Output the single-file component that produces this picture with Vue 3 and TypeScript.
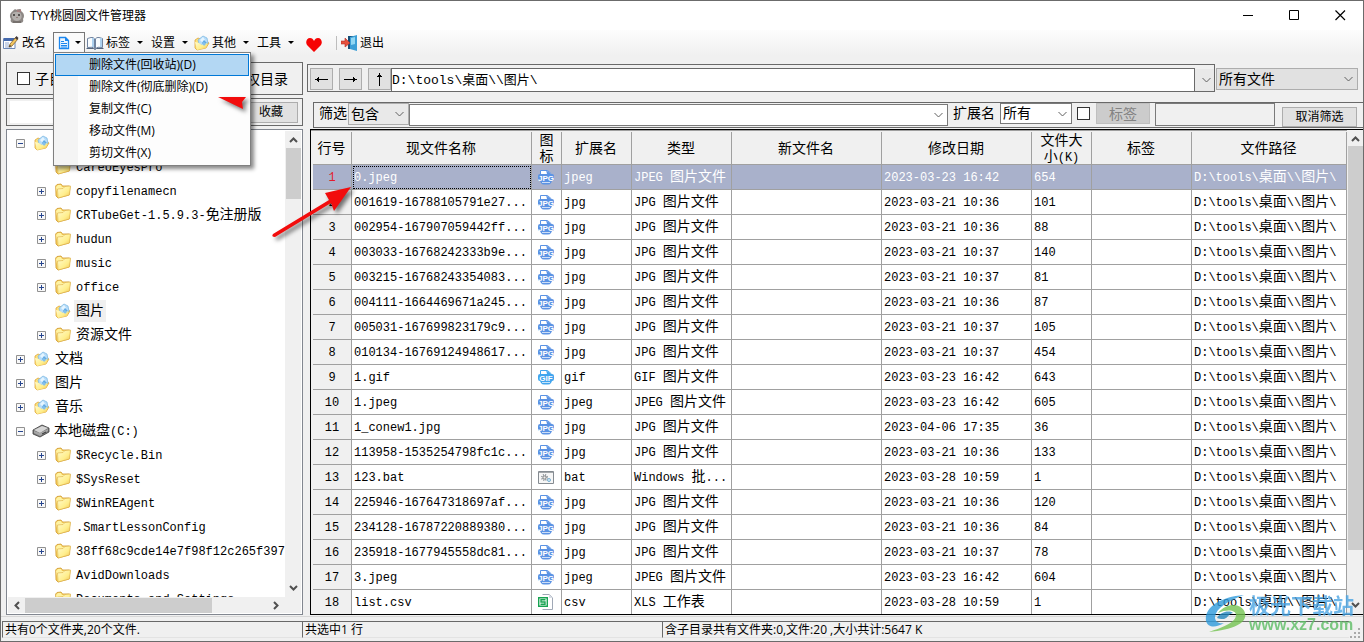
<script setup lang="ts">
import { h, ref } from 'vue'

/* Splits a string into Latin and CJK runs so both share a 1:2 width grid. */
const Mixed = (props: { text: string }) =>
  h(
    'span',
    { class: 'mixed' },
    (props.text.match(/[\x00-\x7f]+|[^\x00-\x7f]+/g) ?? []).map((run) =>
      h('span', { class: run.charCodeAt(0) < 128 ? 'latin' : 'han' }, run),
    ),
  )
Mixed.props = ['text']

interface TreeNode {
  label: string
  level: number
  icon: 'folder' | 'user' | 'drive'
  state: '' | '+' | '-'
  selected?: boolean
}

const nodes: TreeNode[] = [
  { label: '桌面', level: 0, icon: 'user', state: '-' },
  { label: 'CareUEyesPro', level: 1, icon: 'folder', state: '' },
  { label: 'copyfilenamecn', level: 1, icon: 'folder', state: '+' },
  { label: 'CRTubeGet-1.5.9.3-免注册版', level: 1, icon: 'folder', state: '+' },
  { label: 'hudun', level: 1, icon: 'folder', state: '+' },
  { label: 'music', level: 1, icon: 'folder', state: '+' },
  { label: 'office', level: 1, icon: 'folder', state: '+' },
  { label: '图片', level: 1, icon: 'user', state: '', selected: true },
  { label: '资源文件', level: 1, icon: 'folder', state: '+' },
  { label: '文档', level: 0, icon: 'user', state: '+' },
  { label: '图片', level: 0, icon: 'user', state: '+' },
  { label: '音乐', level: 0, icon: 'user', state: '+' },
  { label: '本地磁盘(C:)', level: 0, icon: 'drive', state: '-' },
  { label: '$Recycle.Bin', level: 1, icon: 'folder', state: '+' },
  { label: '$SysReset', level: 1, icon: 'folder', state: '+' },
  { label: '$WinREAgent', level: 1, icon: 'folder', state: '+' },
  { label: '.SmartLessonConfig', level: 1, icon: 'folder', state: '' },
  { label: '38ff68c9cde14e7f98f12c265f3975', level: 1, icon: 'folder', state: '+' },
  { label: 'AvidDownloads', level: 1, icon: 'folder', state: '' },
  { label: 'Documents and Settings', level: 1, icon: 'folder', state: '' },
]

const menuItems = ['删除文件(回收站)(D)', '删除文件(彻底删除)(D)', '复制文件(C)', '移动文件(M)', '剪切文件(X)']

const columns = [
  { title: '行号', cls: 'c-no' },
  { title: '现文件名称', cls: 'c-name' },
  { title: '图标', cls: 'c-icon' },
  { title: '扩展名', cls: 'c-ext' },
  { title: '类型', cls: 'c-type' },
  { title: '新文件名', cls: 'c-new' },
  { title: '修改日期', cls: 'c-date' },
  { title: '文件大小(K)', cls: 'c-size' },
  { title: '标签', cls: 'c-tag' },
  { title: '文件路径', cls: 'c-path' },
]

const raw: [string, string, string, string, string][] = [
  ['0.jpeg', 'jpeg', 'JPEG 图片文件', '2023-03-23 16:42', '654'],
  ['001619-16788105791e27...', 'jpg', 'JPG 图片文件', '2023-03-21 10:36', '101'],
  ['002954-167907059442ff...', 'jpg', 'JPG 图片文件', '2023-03-21 10:36', '88'],
  ['003033-16768242333b9e...', 'jpg', 'JPG 图片文件', '2023-03-21 10:37', '140'],
  ['003215-16768243354083...', 'jpg', 'JPG 图片文件', '2023-03-21 10:37', '81'],
  ['004111-1664469671a245...', 'jpg', 'JPG 图片文件', '2023-03-21 10:36', '87'],
  ['005031-167699823179c9...', 'jpg', 'JPG 图片文件', '2023-03-21 10:37', '105'],
  ['010134-16769124948617...', 'jpg', 'JPG 图片文件', '2023-03-21 10:37', '454'],
  ['1.gif', 'gif', 'GIF 图片文件', '2023-03-23 16:42', '643'],
  ['1.jpeg', 'jpeg', 'JPEG 图片文件', '2023-03-23 16:42', '605'],
  ['1_conew1.jpg', 'jpg', 'JPG 图片文件', '2023-04-06 17:35', '36'],
  ['113958-1535254798fc1c...', 'jpg', 'JPG 图片文件', '2023-03-21 10:36', '133'],
  ['123.bat', 'bat', 'Windows 批...', '2023-03-28 10:59', '1'],
  ['225946-167647318697af...', 'jpg', 'JPG 图片文件', '2023-03-21 10:36', '120'],
  ['234128-16787220889380...', 'jpg', 'JPG 图片文件', '2023-03-21 10:36', '84'],
  ['235918-1677945558dc81...', 'jpg', 'JPG 图片文件', '2023-03-21 10:37', '78'],
  ['3.jpeg', 'jpeg', 'JPEG 图片文件', '2023-03-23 16:42', '604'],
  ['list.csv', 'csv', 'XLS 工作表', '2023-03-28 10:59', '1'],
]
const files = raw.map(([name, ext, type, date, size]) => ({ name, ext, type, date, size, path: 'D:\\tools\\桌面\\\\图片\\' }))

const activeRow = ref(0)
const currentPath = ref('D:\\tools\\桌面\\\\图片\\')
</script>

<template>
  <div class="window">
    <header class="titlebar">
      <svg class="logo" viewBox="0 0 16 16" width="16" height="16">
        <path d="M4 3C5 1 7 1 8 2C10 0 13 1 12 3C15 5 16 8 14 11C15 14 13 15 11 15H5C2 15 1 13 2 11C0 8 1 5 4 3Z" fill="#8d8885" />
        <path d="M3 6C5 3 11 3 12 6C14 10 11 13 8 13S2 10 3 6Z" fill="#b3afac" />
        <path d="M8 1L10 3L12 1L12 4H8Z" fill="#a77f80" />
        <circle cx="5" cy="7" r="1" fill="#35302f" /><circle cx="10" cy="7" r="1" fill="#35302f" />
        <path d="M7 9H9L8 10Z" fill="#76504f" /><path d="M4 13H12V15H4Z" fill="#77716e" />
      </svg>
      <h1>TYY桃圆圆文件管理器</h1>
      <div class="caption">
        <button aria-label="最小化"><svg width="11" height="11"><path d="M0 5.500H10" stroke="#000" /></svg></button>
        <button aria-label="最大化"><svg width="11" height="11"><path d="M.5.5H9.500V9.500H.5Z" fill="none" stroke="#000" /></svg></button>
        <button aria-label="关闭"><svg width="11" height="11"><path d="M.5.5L10 10M10 .5L.5 10" stroke="#000" stroke-width="1.200" /></svg></button>
      </div>
    </header>

    <nav class="toolbar">
      <button class="tool rename">
        <svg width="16" height="16" viewBox="0 0 16 16">
          <path d="M.5 3.500H12V13.500H.5Z" fill="#fff" stroke="#6c87b5" /><path d="M1 3H12V6H1Z" fill="#4469ad" />
          <path d="M2 8H6M2 10H6M2 12H9" stroke="#97acd2" /><path d="M6 12L7 9L13 2L15 4L9 11Z" fill="#f4c761" stroke="#735322" stroke-width=".7" />
          <path d="M12 3L13.500 1L15.500 3L14 5Z" fill="#433938" /><path d="M6 12L7 10L8 11Z" fill="#222" />
        </svg>改名
      </button>
      <div class="menu-host">
        <button class="tool open" aria-label="文件" aria-expanded="true">
          <svg width="12" height="14" viewBox="0 0 12 14"><path d="M1.500 1.500H7.500L10.500 4.500V12.500H1.500Z" fill="#eef6ff" stroke="#1c87ef" stroke-width="1.300" /><path d="M7 1V5H11Z" fill="#1c87ef" /><path d="M3 5.500H6M3 7.500H9M3 9.500H9M3 11H9" stroke="#1c87ef" /></svg>
          <i class="caret"></i>
        </button>
        <ul class="menu" role="menu">
          <li v-for="(item, i) in menuItems" :key="item" role="none">
            <button role="menuitem" :class="{ hot: i === 0 }">{{ item }}</button>
          </li>
        </ul>
      </div>
      <button class="tool tags">
        <svg width="18" height="14" viewBox="0 0 18 14"><path d="M1.500 2.500L5 1.500Q8 1 8.500 3V12.500Q7 10.500 1.500 11.500Z" fill="#f8fcff" stroke="#70839f" /><path d="M16.500 2.500L13 1.500Q10 1 9.500 3V12.500Q11 10.500 16.500 11.500Z" fill="#f8fcff" stroke="#70839f" /><path d="M7 2V11M15 2V11" stroke="#acd0ee" stroke-width="2" /><path d="M.5 12.500H7.500L9 13.500L10.500 12.500H17.500" fill="none" stroke="#53657e" /></svg>标签<i class="caret"></i>
      </button>
      <button class="tool">设置<i class="caret"></i></button>
      <button class="tool other">
        <svg width="16" height="16" viewBox="0 0 16 16"><use href="#user-folder" /></svg>其他<i class="caret"></i>
      </button>
      <button class="tool">工具<i class="caret"></i></button>
      <button class="tool heart" aria-label="收藏夹"><svg width="16" height="14" viewBox="0 0 16 14"><path d="M8 14L1 7C-1 4 1 0 4 0C6 0 7 1 8 3C9 1 10 0 12 0C15 0 17 4 15 7Z" fill="#f60404" /></svg></button>
      <span class="divider"></span>
      <button class="tool exit"><svg width="17" height="16" viewBox="0 0 17 16"><path d="M7 1H15V14H7Z" fill="#164d76" /><path d="M9 2L16 0V16L9 14Z" fill="#3c9fd6" /><path d="M10 3L14 2V9L10 10Z" fill="#91d7f3" /><path d="M0 6H4V3L9 8L4 12V9H0Z" fill="#e6503d" stroke="#b12d26" stroke-width=".6" /></svg>退出</button>
    </nav>

    <svg class="defs" width="0" height="0" aria-hidden="true">
      <defs>
        <linearGradient id="gold" x2="1" y2="1"><stop offset="0" stop-color="#fffbd0" /><stop offset=".6" stop-color="#ffee8c" /><stop offset="1" stop-color="#eebf4e" /></linearGradient>
        <symbol id="folder" viewBox="0 0 16 16"><path d="M.7 3L2 1.500L6 1L7.500 3H14.500L15 4L14 12L3 15L1 13Z" fill="#f7cf5b" stroke="#cf982f" stroke-width=".8" /><path d="M1 4L3 2H6L7 4L14 3.500V11L3 14Z" fill="#fff3a2" /><path d="M2.500 6L8 5.500L10 3.500L15.500 3L14.500 12L3 15Z" fill="url(#gold)" stroke="#dbac45" stroke-width=".6" /></symbol>
        <symbol id="user-folder" viewBox="0 0 16 16"><path d="M1 5L4 3L12 6L15 8L12 13L3 15L1 13Z" fill="#ffe27a" stroke="#d99c2d" stroke-width=".7" /><path d="M4 5L9 1L13 3L14 8L10 11L5 9Z" fill="#b6dcfa" stroke="#77b5df" stroke-width=".7" /><path d="M6 5L9 2L11 5L8 7Z" fill="#e5f5ff" /><path d="M10 5L13 8L10 11L8 8Z" fill="#62aae3" /><path d="M1 7L5 8L8 10L13 8L12 13L3 15Z" fill="url(#gold)" /><path d="M8 8L10 7L12 9L10 11Z" fill="#83bfeb" /></symbol>
        <symbol id="drive" viewBox="0 0 18 14"><path d="M1 6L10 1L17 4V8L8 13L1 10Z" fill="#777" stroke="#3f3f3f" stroke-width=".8" /><path d="M2 6L10 2L16 4L8 9Z" fill="#d5d5d5" /><path d="M8 9L16 5V7L8 12L2 9V7Z" fill="#a6a6a6" /><path d="M10 10L14 8" stroke="#343434" /></symbol>
      </defs>
    </svg>

    <main class="body">
      <aside class="side">
        <div class="box options">
          <label><input type="checkbox" />子目录</label>
          <span>授权目录</span>
        </div>
        <div class="box favorite">
          <input type="text" aria-label="收藏目录" />
          <button class="btn">收藏</button>
        </div>
        <div class="tree">
          <div class="tree-main">
            <ul class="nodes">
              <li v-for="(n, i) in nodes" :key="i" :class="'level' + n.level">
                <button v-if="n.state" class="expander" :aria-label="n.state === '+' ? '展开' : '折叠'">
                  <svg width="9" height="9"><path d="M.5.5H8.500V8.500H.5Z" fill="#f8f8f8" stroke="#919191" /><path d="M2 4.500H7" stroke="#27468f" /><path v-if="n.state === '+'" d="M4.500 2V7" stroke="#27468f" /></svg>
                </button>
                <span v-else class="expander"></span>
                <svg v-if="n.icon === 'drive'" class="ico drive" width="18" height="14"><use href="#drive" /></svg>
                <svg v-else class="ico" width="16" height="16"><use :href="n.icon === 'user' ? '#user-folder' : '#folder'" /></svg>
                <span class="label" :class="{ picked: n.selected }"><Mixed :text="n.label" /></span>
              </li>
            </ul>
            <div class="vbar"><svg width="9" height="6"><path d="M1 5L4.500 1.500L8 5" /></svg><i class="tree-thumb"></i><svg class="end" width="9" height="6"><path d="M1 1L4.500 4.500L8 1" /></svg></div>
          </div>
          <div class="hbar"><svg width="6" height="9"><path d="M5 1L1.500 4.500L5 8" /></svg><i></i><svg class="end" width="6" height="9"><path d="M1 1L4.500 4.500L1 8" /></svg></div>
        </div>
      </aside>

      <section class="content">
        <div class="path-row">
          <div class="pathbox">
            <button class="btn arrow" aria-label="后退"><svg width="13" height="7"><path d="M0 3.500H13M3.500 1V6M2.500 2V5" stroke="#000" /></svg></button>
            <button class="btn arrow" aria-label="前进"><svg width="13" height="7"><path d="M0 3.500H13M9.500 1V6M10.500 2V5" stroke="#000" /></svg></button>
            <button class="btn arrow" aria-label="上一级"><svg width="7" height="13"><path d="M3.500 0V13M1 3.500H6M2 2.500H5" stroke="#000" /></svg></button>
            <input v-model="currentPath" type="text" aria-label="路径" />
            <button class="drop" aria-label="历史路径"><svg width="9" height="6"><path d="M.5 1L4.500 5L8.500 1" /></svg></button>
          </div>
          <div class="combo grey kinds"><select aria-label="文件种类"><option>所有文件</option></select><svg width="9" height="6"><path d="M.5 1L4.500 5L8.500 1" /></svg></div>
        </div>

        <div class="filter">
          <label for="mode">筛选</label>
          <div class="combo grey mode"><select id="mode"><option>包含</option></select><svg width="9" height="6"><path d="M.5 1L4.500 5L8.500 1" /></svg></div>
          <div class="combo words"><select aria-label="筛选内容"><option></option></select><svg width="9" height="6"><path d="M.5 1L4.500 5L8.500 1" /></svg></div>
          <label for="ext" class="ext-label">扩展名</label>
          <div class="combo ext"><select id="ext"><option>所有</option></select><svg width="9" height="6"><path d="M.5 1L4.500 5L8.500 1" /></svg></div>
          <input type="checkbox" aria-label="按标签筛选" />
          <button class="btn tag" disabled>标签</button>
          <input class="tagtext" type="text" aria-label="标签内容" disabled />
          <button class="btn cancel">取消筛选</button>
        </div>

        <div class="grid">
          <div class="table-wrap">
            <table>
              <colgroup><col v-for="c in columns" :key="c.cls" :class="c.cls" /></colgroup>
              <thead>
                <tr><th v-for="c in columns" :key="c.cls" scope="col" :class="c.cls"><div><Mixed :text="c.title" /></div></th></tr>
              </thead>
              <tbody>
                <tr v-for="(f, i) in files" :key="f.name" :class="{ active: i === activeRow }" @click="activeRow = i">
                  <th scope="row"><Mixed :text="String(i + 1)" /></th>
                  <td class="name"><Mixed :text="f.name" /></td>
                  <td class="file-icon">
                    <svg v-if="f.ext === 'bat'" width="16" height="13" viewBox="0 0 16 13"><path d="M.5.5H15.500V12.500H.5Z" fill="#f6f6f6" stroke="#858b91" /><path d="M1 1.500H15" stroke="#a3a7aa" /><circle cx="6.500" cy="6.500" r="2.500" fill="none" stroke="#8e9499" stroke-dasharray="1 1" stroke-width="2" /><circle cx="6.500" cy="6.500" r="1.500" fill="#eee" stroke="#888" /><circle cx="11" cy="9" r="1.500" fill="#d7edf9" stroke="#77aed0" /></svg>
                    <svg v-else-if="f.ext === 'csv'" width="16" height="16" viewBox="0 0 16 16"><path d="M4.500.5H11.500L14.500 3.500V15.500H4.500" fill="#fff" stroke="#a0a8b6" /><path d="M11 0V4H15" fill="#d9dee5" /><path d="M.7 3.700H9.300V12.300H.7Z" fill="#fff" stroke="#18a452" stroke-width="1.400" /><path d="M7.500 5.700H3V8H7V10.300H2.500" fill="none" stroke="#18a452" stroke-width="1.400" /></svg>
                    <svg v-else width="16" height="16" viewBox="0 0 16 16" :class="f.ext === 'gif' ? 'gif' : 'jpg'">
                      <path d="M2.500 6V1.500H9.500L13.500 5V7" fill="#fff" stroke="currentColor" /><path d="M8 1L13 5H9Z" fill="currentColor" />
                      <path d="M2 5H14Q16 5 16 7V10Q16 12 14 12L13 14Q12 15.500 10 15.500H6Q4 15.500 3 14L2 12Q0 12 0 10V7Q0 5 2 5Z" fill="currentColor" /><path d="M4 13.500H12" stroke="#fff" opacity=".7" />
                      <text x="8" y="12" text-anchor="middle">{{ f.ext === 'gif' ? 'GIF' : 'JPG' }}</text>
                    </svg>
                  </td>
                  <td><Mixed :text="f.ext" /></td>
                  <td><Mixed :text="f.type" /></td>
                  <td></td>
                  <td><Mixed :text="f.date" /></td>
                  <td><Mixed :text="f.size" /></td>
                  <td></td>
                  <td><Mixed :text="f.path" /></td>
                </tr>
              </tbody>
            </table>
          </div>
          <div class="vbar"><svg width="9" height="6"><path d="M1 5L4.500 1.500L8 5" /></svg><i class="grid-thumb"></i><svg class="end" width="9" height="6"><path d="M1 1L4.500 4.500L8 1" /></svg></div>
        </div>
      </section>
    </main>

    <footer class="status">
      <span class="s1">共有0个文件夹,20个文件.</span>
      <span class="s2">共选中1 行</span>
      <span class="s3">含子目录共有文件夹:0,文件:20 ,大小共计:5647 K</span>
      <svg class="grip" width="11" height="11"><path d="M8 0h2v2h-2zM4 4h2v2h-2zM8 4h2v2h-2zM0 8h2v2h-2zM4 8h2v2h-2zM8 8h2v2h-2z" fill="#aaa" /></svg>
    </footer>

    <svg class="pointer" width="150" height="150" viewBox="0 0 150 150" aria-hidden="true">
      <path d="M3 1L31 1L27 6L28 13Z" fill="#f20d0d" />
      <path d="M58 138L114 104L110 97L136 91L119 115L116 107L60 141Q56 141 58 138Z" fill="#f20d0d" />
    </svg>

    <div class="watermark" aria-hidden="true">
      <svg width="44" height="42" viewBox="0 0 44 42">
        <path d="M1 28C-1 15 14 4 39 2C23 8 11 15 10 24C10 29 14 31 19 30C11 35 3 35 1 28Z" fill="#2f9bdc" />
        <path d="M13 20C22 9 37 10 40 20C43 30 27 37 4 39C19 34 31 29 31 22C31 17 22 16 13 20Z" fill="#75c452" />
        <path d="M12 25C15 19 24 17 28 20C22 21 23 29 12 25Z" fill="#2487bd" />
      </svg>
      <div><strong>极光下载站</strong><b>www.xz7.com</b></div>
    </div>
  </div>
</template>

<style>
body { margin: 0; overflow: hidden; }
.mixed .latin { font-family: "Liberation Mono", monospace; font-size: 12px; line-height: 12px; white-space: pre; }
.mixed .han { font-family: "Noto Sans CJK SC", sans-serif; font-size: 14px; line-height: 14px; }
</style>

<style scoped>
* { box-sizing: border-box; }
.window { position: relative; display: flex; flex-direction: column; height: 100vh; border: 1px solid #6b6b6b; background: #f0f0f0; color: #000; font: 12px/16px "Open Sans", "Noto Sans CJK SC", sans-serif; }
button, input, select { font: inherit; color: inherit; margin: 0; border-radius: 0; }
button { padding: 0; border: 0; background: none; }
svg { display: block; flex: none; }
ul { list-style: none; margin: 0; padding: 0; }
.defs { position: absolute; }

.titlebar { display: flex; align-items: center; flex: none; height: 29px; padding-left: 8px; background: #fff; }
h1 { flex: 1; margin: 0 0 0 5px; font-size: 12px; font-weight: 400; }
.caption { display: flex; }
.caption button { display: grid; place-items: center; width: 46px; height: 28px; }

.toolbar { display: flex; align-items: center; flex: none; height: 25px; padding-left: 2px; background: linear-gradient(#fdfdfd, #f0f0f0); }
.tool { display: flex; align-items: center; height: 22px; white-space: nowrap; }
.rename { gap: 3px; width: 50px; }
.caret { margin: 0 8px 0 7px; border: 3px solid transparent; border-top-color: #000; border-bottom: 0; }
.menu-host { position: relative; }
.open { width: 32px; padding-left: 4px; border: 1px solid #777; border-bottom-color: #fafafa; background: #fafafa; }
.open .caret { margin: 0 0 0 5px; }
.tags { gap: 2px; padding-left: 1px; }
.tags .caret { margin-left: 5px; }
.other { gap: 2px; }
.other svg { margin-left: -2px; }
.other .caret { margin-left: 5px; }
.heart { margin: 4px 14px 0 4px; }
.divider { width: 1px; height: 14px; margin-right: 4px; background: #bdbdbd; }
.exit { gap: 2px; }
.menu { position: absolute; z-index: 3; top: 20px; left: 0; width: 198px; padding: 1px; border: 1px solid #808080; background: linear-gradient(90deg, #f4f4f4 24px, #fdfdfd 24px); box-shadow: 3px 3px 4px #0007; }
.menu button { display: block; width: 100%; height: 22px; padding-left: 33px; border: 1px solid transparent; text-align: left; line-height: 20px; }
.menu .hot { border-color: #0078d7; background: #b3d7f3; }

.body { display: flex; flex: 1; min-height: 0; }
.side { display: flex; flex-direction: column; gap: 3px; flex: none; width: 297px; margin: 7px 0 1px 5px; }
.box { display: flex; align-items: center; border: 1px solid #696969; flex: none; }
.options { justify-content: space-between; height: 33px; padding: 0 14px 0 10px; font-size: 14px; }
.options label { display: flex; align-items: center; gap: 5px; }
input[type="checkbox"] { appearance: none; flex: none; width: 13px; height: 13px; border: 1px solid #333; background: #fff; }
.favorite { height: 28px; padding: 0 4px 0 3px; }
.favorite input { flex: 1; min-width: 0; height: 22px; border: 0; background: #fff; }
.btn { display: grid; place-items: center; flex: none; border: 1px solid #adadad; background: #e1e1e1; }
.favorite .btn { width: 54px; height: 21px; }

.tree { display: flex; flex-direction: column; flex: 1; min-height: 0; border: 1px solid #828790; background: #fff; padding: 1px; }
.tree-main { display: flex; flex: 1; min-height: 0; }
.nodes { flex: 1; min-width: 0; overflow: hidden; }
.nodes li { display: flex; align-items: center; height: 24px; padding-left: 8px; white-space: nowrap; }
.nodes .level1 { padding-left: 29px; }
.expander { flex: none; width: 9px; height: 9px; }
.ico { margin: 0 3px 0 9px; }
.ico.drive { margin: 0 2px 0 7px; }
.label { height: 22px; padding: 0 2px; line-height: 21px; }
.picked { background: #f0f0f0; }
.vbar { display: flex; flex-direction: column; align-items: center; flex: none; width: 16px; padding: 6px 0; background: #f0f0f0; }
.vbar i, .hbar i { background: #cdcdcd; }
.vbar path, .hbar path { fill: none; stroke: #505050; stroke-width: 2; }
.tree-thumb { width: 15px; height: 51px; margin-top: 5px; }
.vbar .end { margin-top: auto; }
.hbar { display: flex; align-items: center; flex: none; height: 16px; padding: 0 22px 0 6px; background: #f0f0f0; }
.hbar i { width: 187px; height: 15px; margin-left: 5px; }
.hbar .end { margin-left: auto; }

.content { display: flex; flex-direction: column; flex: 1; min-width: 0; padding: 9px 0 1px 4px; }
.path-row { display: flex; gap: 1px; flex: none; padding-right: 5px; }
.pathbox { display: flex; align-items: flex-end; flex: 1; min-width: 0; height: 28px; border: 1px solid #696969; padding-left: 2px; }
.arrow { width: 23px; height: 22px; margin: 0 6px 1px 0; }
.arrow:nth-child(3) { margin-right: 0; }
.pathbox input { flex: 1; min-width: 0; height: 23px; padding: 0 0 3px; border: 1px solid #696969; border-bottom: 0; background: #fff; font: 13px/18px "Liberation Mono", "Noto Sans CJK SC", monospace; }
.drop { display: grid; place-items: center; width: 19px; height: 22px; padding-left: 4px; background: #e9e9e9; }
.drop path, .combo path { fill: none; stroke: #606060; stroke-width: 1; }
.combo { position: relative; flex: none; }
.combo select { appearance: none; display: block; width: 100%; height: 100%; padding: 0 20px 1px 2px; border: 1px solid #7a7a7a; background: #fff; font-size: 14px; line-height: 18px; }
.combo.grey select { border-color: #adadad; background: #e1e1e1; }
.combo svg { position: absolute; right: 5px; top: 8px; pointer-events: none; }
.kinds { width: 142px; height: 22px; margin-top: 4px; }

.filter { display: flex; align-items: flex-start; flex: none; height: 26px; margin: 10px 0 1px 6px; padding: 0 6px 0 5px; border: 1px solid #696969; border-right: 0; font-size: 14px; line-height: 20px; }
.filter label { white-space: nowrap; }
.mode { width: 61px; height: 22px; margin-left: 1px; }
.grey.mode select { background: #e9e9e9; }
.words { flex: 1; height: 22px; margin-top: 1px; }
.ext-label { margin-left: 5px; }
.ext { width: 72px; height: 21px; margin-left: 5px; }
.filter input[type="checkbox"] { margin: 4px 6px 0 5px; }
.tag { width: 54px; height: 21px; border-color: #bfbfbf; background: #ccc; color: #838383; font-size: 14px; }
.tagtext { width: 120px; height: 23px; margin-left: 5px; border: 1px solid #7a7a7a; background: #f0f0f0; }
.cancel { width: 75px; height: 20px; margin: 4px 0 0 7px; font-size: 12px; line-height: 16px; }

.grid { display: flex; flex: 1; min-height: 0; margin-left: 3px; border: 1px solid #000; border-right: 0; background: #f0f0f0; }
.table-wrap { flex: 1; min-width: 0; overflow: hidden; padding: 0 0 0 2px; border-top: 1px solid #a0a0a0; }
table { width: 100%; table-layout: fixed; border-collapse: separate; border-spacing: 0; }
col.c-no { width: 39px; } col.c-name { width: 180px; } col.c-icon { width: 30px; } col.c-ext { width: 70px; }
col.c-type { width: 100px; } col.c-new { width: 150px; } col.c-date { width: 150px; } col.c-size { width: 60px; } col.c-tag { width: 100px; }
th, td { overflow: hidden; padding: 0; border-right: 1px solid #a0a0a0; border-bottom: 1px solid #a0a0a0; font-weight: 400; white-space: nowrap; }
thead th { height: 34px; border-right: 0; text-align: center; }
thead th > div { display: flex; align-items: center; justify-content: center; height: 32px; padding-right: 1px; line-height: 15px; border-right: 1px solid #a0a0a0; white-space: normal; }
thead .c-icon > div { padding: 0 7px; }
thead .c-size > div { padding: 0 8px; }
tbody th, tbody td { height: 25px; line-height: 22px; }
tbody th { background: #f0f0f0; }
td { padding-left: 2px; background: #fff; }
.file-icon { padding-left: 6px; }
.jpg { color: #5b93e4; }
.gif { color: #42a5ee; }
.file-icon text { fill: #fff; font: bold 8px "Liberation Sans", sans-serif; }
.active th, .active td { background: #a9b1cb; color: #fff; }
.active th { color: #e31b2c; }
.active .name { outline: 1px dotted #000; outline-offset: -2px; }
.grid-thumb { width: 15px; height: 404px; margin-top: 4px; }

.status { display: flex; align-items: flex-start; flex: none; position: relative; height: 25px; padding: 4px 14px 0 1px; border-top: 1px solid #d7d7d7; }
.status span { height: 17px; padding-left: 2px; border-top: 1px solid #696969; border-left: 1px solid #696969; border-bottom: 1px solid #e3e3e3; white-space: nowrap; line-height: 15px; }
.s1 { width: 300px; } .s2 { width: 360px; } .s3 { flex: 1; }
.grip { position: absolute; right: 2px; bottom: 2px; }

.pointer { position: absolute; z-index: 4; top: 95px; left: 214px; filter: drop-shadow(3px 3px 2px #0008); pointer-events: none; }
.watermark { position: absolute; z-index: 4; right: 9px; bottom: 6px; display: flex; align-items: center; pointer-events: none; opacity: .8; }
.watermark div { display: flex; flex-direction: column; white-space: nowrap; }
.watermark strong { color: #4aa4e3; font: 700 21px/22px "Noto Sans CJK SC", sans-serif; }
.watermark b { color: #5dbd65; font: 700 16px/20px "Liberation Sans", sans-serif; }
</style>
